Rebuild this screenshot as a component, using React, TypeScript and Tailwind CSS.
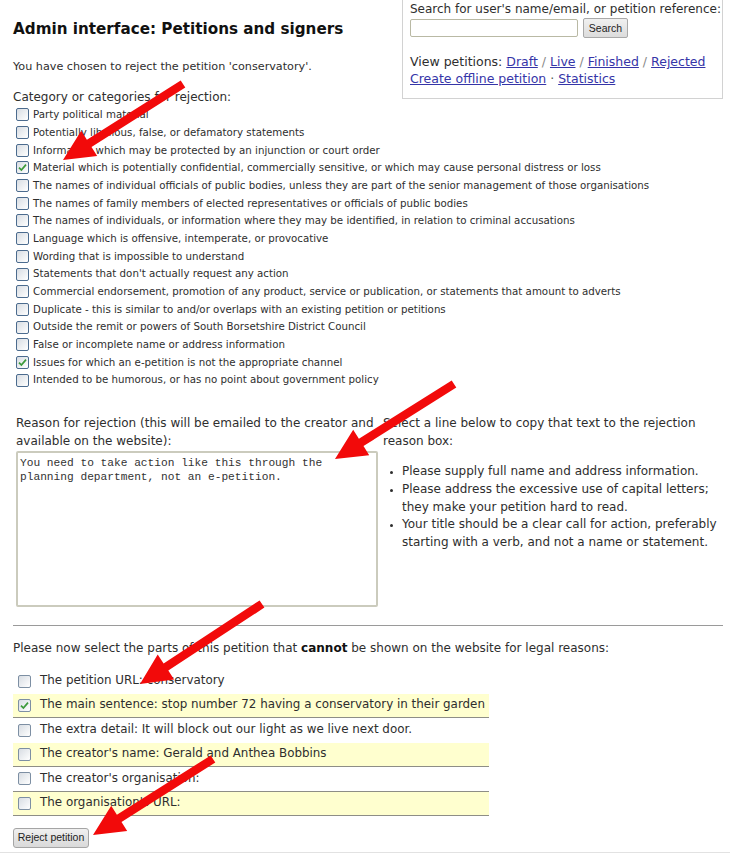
import React from 'react';

const categories: [string, boolean][] = [
  ['Party political material', false],
  ['Potentially libellous, false, or defamatory statements', false],
  ['Information which may be protected by an injunction or court order', false],
  ['Material which is potentially confidential, commercially sensitive, or which may cause personal distress or loss', true],
  ['The names of individual officials of public bodies, unless they are part of the senior management of those organisations', false],
  ['The names of family members of elected representatives or officials of public bodies', false],
  ['The names of individuals, or information where they may be identified, in relation to criminal accusations', false],
  ['Language which is offensive, intemperate, or provocative', false],
  ['Wording that is impossible to understand', false],
  ["Statements that don't actually request any action", false],
  ['Commercial endorsement, promotion of any product, service or publication, or statements that amount to adverts', false],
  ['Duplicate - this is similar to and/or overlaps with an existing petition or petitions', false],
  ['Outside the remit or powers of South Borsetshire District Council', false],
  ['False or incomplete name or address information', false],
  ['Issues for which an e-petition is not the appropriate channel', true],
  ['Intended to be humorous, or has no point about government policy', false],
];

// label, checked, yellow row, bottom rule
const parts: [string, boolean, boolean, boolean][] = [
  ['The petition URL: conservatory', false, false, false],
  ['The main sentence: stop number 72 having a conservatory in their garden', true, true, true],
  ['The extra detail: It will block out our light as we live next door.', false, false, false],
  ["The creator's name: Gerald and Anthea Bobbins", false, true, true],
  ["The creator's organisation:", false, false, true],
  ["The organisation's URL:", false, true, true],
];

function Check({ checked, light }: { checked: boolean; light?: boolean }) {
  return (
    <span
      className={
        'inline-flex h-[13px] w-[13px] shrink-0 items-center justify-center rounded-[2px] border bg-linear-to-br from-[#d8dde3] to-white ' +
        (light ? 'border-[#7d8fa3]' : 'border-[#4b6b8e]')
      }
    >
      {checked && (
        <svg width="11" height="11" viewBox="0 0 11 11">
          <path d="M2 5.6 L4.4 8 L9 2.6" fill="none" stroke="#3c9a3a" strokeWidth="1.7" />
        </svg>
      )}
    </span>
  );
}

function arrowPoints(tx: number, ty: number, hx: number, hy: number) {
  const dx = hx - tx;
  const dy = hy - ty;
  const len = Math.hypot(dx, dy);
  const ux = dx / len;
  const uy = dy / len;
  const nx = -uy;
  const ny = ux;
  const w = 4.3;
  const L = 31;
  const W = 15;
  const bx = hx - ux * L;
  const by = hy - uy * L;
  const pts = [
    [tx + nx * w, ty + ny * w],
    [bx + nx * w, by + ny * w],
    [bx + nx * W, by + ny * W],
    [hx, hy],
    [bx - nx * W, by - ny * W],
    [bx - nx * w, by - ny * w],
    [tx - nx * w, ty - ny * w],
  ];
  return pts.map((p) => p.map((v) => v.toFixed(1)).join(',')).join(' ');
}

const arrows = [
  [183, 84, 63, 160],
  [454, 384, 335, 459],
  [262, 604, 140, 684],
  [213, 759, 93, 835],
];

export default function App() {
  return (
    <div className="relative h-[855px] w-[730px] overflow-hidden bg-white font-['DejaVu_Sans',sans-serif] text-[#2e2e2e]">
      <div className="flow-root pl-[13px] pr-[7px]">
        {/* search panel */}
        <div className="float-right w-[321px] border border-t-0 border-[#d2d2d2] pb-[11px] pl-[7px] pt-[1px] text-[12px] leading-[16px]">
          <div className="whitespace-nowrap">Search for user's name/email, or petition reference:</div>
          <div className="mt-[1px] flex items-center gap-[5px]">
            <input
              className="h-[18px] w-[168px] rounded-[2px] border border-[#b9b9a4] bg-white"
              type="text"
            />
            <button className="h-[20px] w-[45px] rounded-[2px] border border-[#a9a9a9] bg-linear-to-b from-[#f0f0f0] to-[#dcdcdc] font-['Liberation_Sans',sans-serif] text-[10.5px] text-[#222]">
              Search
            </button>
          </div>
          <div className="mt-[15px] whitespace-nowrap text-[12.5px] leading-[17px]">
            View petitions: <a className="text-[#3535a8] underline">Draft</a>
            <span className="text-[#888]"> / </span>
            <a className="text-[#3535a8] underline">Live</a>
            <span className="text-[#888]"> / </span>
            <a className="text-[#3535a8] underline">Finished</a>
            <span className="text-[#888]"> / </span>
            <a className="text-[#3535a8] underline">Rejected</a>
          </div>
          <div className="whitespace-nowrap text-[12.5px] leading-[17px]">
            <a className="text-[#3535a8] underline">Create offline petition</a>
            <span className="text-[#555]"> · </span>
            <a className="text-[#3535a8] underline">Statistics</a>
          </div>
        </div>

        <h1 className="mt-[20px] text-[15.2px] font-bold leading-[18px] text-[#111]">
          Admin interface: Petitions and signers
        </h1>

        <p className="mt-[21px] text-[11.2px] leading-[16px]">
          You have chosen to reject the petition 'conservatory'.
        </p>

        <div className="mt-[14px] text-[12px] leading-[16px]">Category or categories for rejection:</div>

        <div className="mt-[1px] pl-[3px]">
          {categories.map(([label, checked]) => (
            <div key={label} className="flex h-[17.7px] items-center gap-[4px] whitespace-nowrap text-[10.25px]">
              <Check checked={checked} />
              <span>{label}</span>
            </div>
          ))}
        </div>

        {/* rejection reason */}
        <div className="mt-[25px] grid grid-cols-[362px_1fr] gap-x-[5px] pl-[3px] text-[12px] leading-[18px]">
          <div>
            <div className="whitespace-nowrap">
              Reason for rejection (this will be emailed to the creator and
              <br />
              available on the website):
            </div>
            <textarea
              className="mt-[1px] block h-[156px] w-[362px] resize-none rounded-[2px] border-2 border-[#cbcbbd] px-[2px] pb-[2px] pt-[3px] font-['Liberation_Mono',monospace] text-[11.2px] leading-[14px] text-[#333]"
              defaultValue={'You need to take action like this through the\nplanning department, not an e-petition.'}
            />
          </div>
          <div className="whitespace-nowrap">
            <div>
              Select a line below to copy that text to the rejection
              <br />
              reason box:
            </div>
            <ul className="mt-[13px] list-disc pl-[19px] leading-[17.75px] marker:text-[9px]">
              <li>Please supply full name and address information.</li>
              <li>
                Please address the excessive use of capital letters;
                <br />
                they make your petition hard to read.
              </li>
              <li>
                Your title should be a clear call for action, preferably
                <br />
                starting with a verb, and not a name or statement.
              </li>
            </ul>
          </div>
        </div>

        <div className="mt-[18px] border-t border-[#9a9a9a]" />

        <p className="mt-[14px] whitespace-nowrap text-[12px] leading-[16px]">
          Please now select the parts of this petition that <b className="text-[#111]">cannot</b> be shown on the
          website for legal reasons:
        </p>

        <div className="mt-[13px] w-[476px] text-[11.9px]">
          {parts.map(([label, checked, yellow, rule]) => (
            <div
              key={label}
              className={
                'flex h-[24.5px] items-center gap-[9px] whitespace-nowrap pl-[5px] ' +
                (yellow ? 'bg-[#ffffcf] ' : '') +
                (rule ? 'border-b border-[#8e8e86]' : '')
              }
            >
              <Check checked={checked} light />
              <span>{label}</span>
            </div>
          ))}
        </div>

        <button className="mt-[12px] block h-[20px] w-[76px] rounded-[3px] border border-[#a5a5a5] bg-linear-to-b from-[#f0f0f0] to-[#d9d9d9] font-['Liberation_Sans',sans-serif] text-[10.5px] text-[#222]">
          Reject petition
        </button>
      </div>

      <div className="mt-[4px] border-t border-[#e2e2e2]" />

      {/* red annotation arrows */}
      <svg className="pointer-events-none absolute inset-0 h-full w-full" viewBox="0 0 730 855">
        {arrows.map(([tx, ty, hx, hy], i) => (
          <polygon key={i} points={arrowPoints(tx, ty, hx, hy)} fill="#f20a0a" />
        ))}
      </svg>
    </div>
  );
}
